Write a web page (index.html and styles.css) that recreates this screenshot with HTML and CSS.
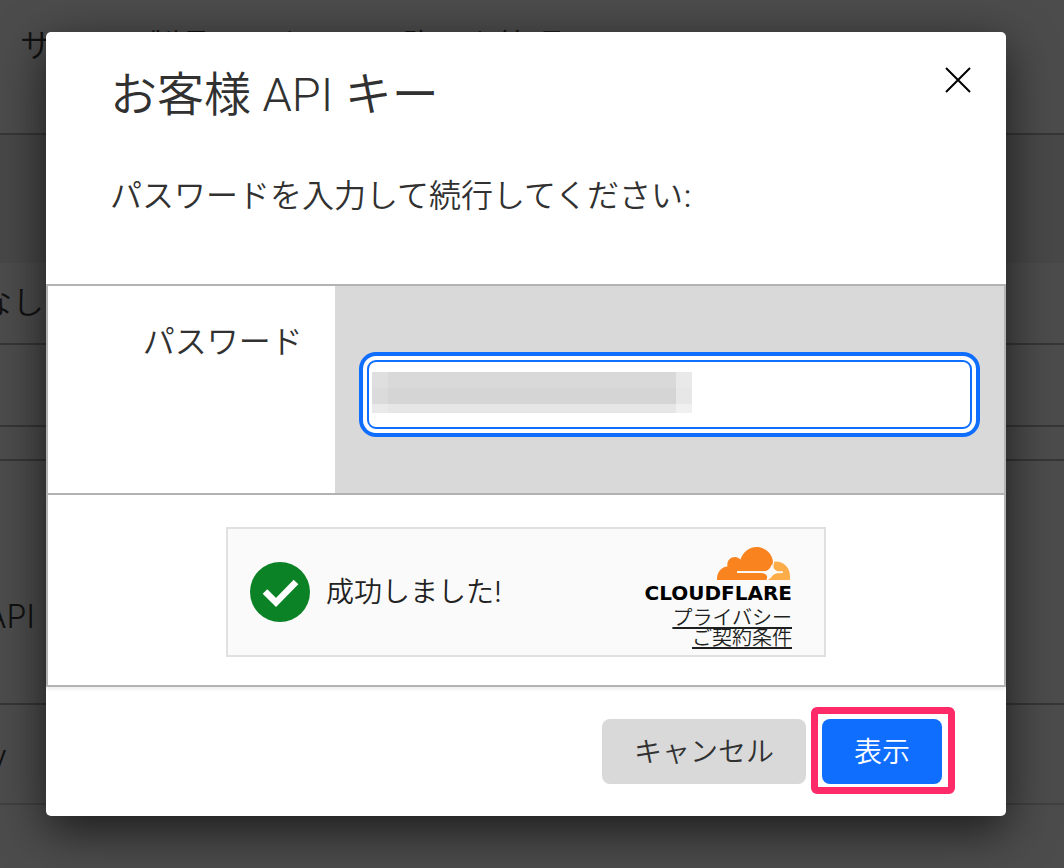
FILE: index.html
```html
<!DOCTYPE html>
<html lang="ja">
<head>
<meta charset="utf-8">
<meta name="viewport" content="width=device-width, initial-scale=1">
<title>お客様 API キー</title>
<link rel="stylesheet" href="styles.css">
</head>
<body>
<div class="page">
  <div class="page-row page-intro">サイトと製品のアクセスと許可を管理し</div>
  <div class="page-row page-head"></div>
  <div class="page-row page-item"><span>なし</span></div>
  <div class="page-row page-item"></div>
  <div class="page-row page-gap"></div>
  <div class="page-row page-key"><span>API</span></div>
  <div class="page-row page-last"><span>y</span></div>
</div>

<div class="overlay">
  <main class="dialog" role="dialog" aria-modal="true" aria-labelledby="dialog-title">
    <header class="dialog-header">
      <div class="title-bar">
        <h1 class="title" id="dialog-title">お客様 API キー</h1>
        <button class="close" type="button" aria-label="閉じる">
          <svg width="28" height="28" viewBox="0 0 28 28" fill="none" stroke="#000" stroke-width="2"><path d="M2 2 26 26M26 2 2 26"/></svg>
        </button>
      </div>
      <p class="lead">パスワードを入力して続行してください:</p>
    </header>

    <form class="form">
      <div class="field">
        <label class="field-label" for="password">パスワード</label>
        <div class="field-control">
          <div class="input-wrap">
            <input class="input" id="password" type="password">
            <span class="mask" aria-hidden="true"></span>
          </div>
        </div>
      </div>

      <div class="verify">
        <div class="widget">
          <svg class="check" width="60" height="60" viewBox="0 0 60 60"><circle cx="30" cy="30" r="30" fill="#0b8226"/><path d="M15 29.5 26 40.5 46 20" fill="none" stroke="#fff" stroke-width="6.5"/></svg>
          <span class="widget-text">成功しました!</span>
          <div class="brand">
            <svg class="cloud" width="73" height="33" viewBox="0 0 73 33">
              <path fill="#f9831f" d="M0 33C-.5 26 4 20 10.500 19.500 9.500 14 13 10 18 10 20 10 22 11 23.500 12.500 26 5 32 0 39.500 0 48 0 55 6 56 14.500L55 19.500C54 22.500 52 24 49.500 24.300H20V26H47.500C50 26.500 51 28.500 50 31L49.500 33Z"/>
              <path fill="#fcad48" d="M57.500 14.500C66 14 73 20 73 29V32.300L72.500 33H51.500C52 30.500 53.500 27.500 56 26H66V24.400H60.500C57.500 23.500 56 21.500 56.500 18.500Z"/>
              <path fill="#fafafa" d="M54.500 17.500 56 20C57 22.500 59 24 62 24.500L66 24.700V25.900L60 26.200C57 26.800 55 28.500 54 31L51.500 32 50 29C49 27 47 26.200 44.500 26H20V24.300H47C51 24 53.500 21.500 54.500 17.500Z"/>
            </svg>
            <span class="wordmark">CLOUDFLARE</span>
            <a class="link" href="#privacy">プライバシー</a>
            <a class="link" href="#terms">ご契約条件</a>
          </div>
        </div>
      </div>

      <footer class="actions">
        <button class="button" type="button">キャンセル</button>
        <div class="submit-wrap">
          <button class="button primary" type="submit">表示</button>
          <span class="highlight" aria-hidden="true"></span>
        </div>
      </footer>
    </form>
  </main>
</div>
</body>
</html>
```

FILE: styles.css
```css
* { box-sizing: border-box; }

body {
  margin: 0;
  min-height: 100vh;
  position: relative;
  overflow: hidden;
  background: #4c4c4c;
  color: #313131;
  font-family: Inter, "Noto Sans CJK JP", sans-serif;
  font-weight: 350;
  font-size: 32px;
}

.page { color: #111; line-height: 40px; }
.page-row { border-bottom: 2px solid #363636; white-space: nowrap; }
.page-row span { display: flex; justify-content: flex-end; width: 44px; }
.page-intro { height: 135px; padding: 26px 20px; }
.page-head { height: 128px; border-bottom: 0; background: #484848; }
.page-item { height: 82px; padding-top: 20px; }
.page-gap { height: 34px; }
.page-key { height: 244px; padding-top: 136px; }
.page-row.page-key span { width: 35px; }
.page-last { height: 100px; padding-top: 32px; border-color: #404040; }
.page-row.page-last span { width: 7px; }

.overlay {
  position: absolute;
  inset: 0;
  padding: 32px 58px 52px 46px;
}

.dialog {
  background: #fff;
  border-radius: 5px;
  box-shadow: 0 14px 48px rgba(0, 0, 0, .65);
}

.dialog-header { padding: 32px 32px 64px 64px; }
.title-bar { display: flex; justify-content: space-between; align-items: flex-start; }
.title { margin: 0; font-family: Roboto, "Noto Sans CJK JP", sans-serif; font-size: 47px; font-weight: 350; line-height: 62px; }
.close { padding: 0; border: 0; background: none; line-height: 0; margin: 2px; }
.lead { margin: 46px 0 0; line-height: 48px; }

.field {
  display: grid;
  grid-template-columns: 3fr 7fr;
  border: 2px solid #b3b3b3;
}
.field-label { padding: 32px 32px 0 0; text-align: right; line-height: 48px; }
.field-control { padding: 74px 32px 64px; background: #d9d9d9; }
.input-wrap { position: relative; }
.input {
  display: block;
  width: 100%;
  height: 69px;
  padding: 0 16px;
  border: 2px solid #106eff;
  border-radius: 9px;
  background: #fff;
  outline: 0;
  box-shadow: 0 0 0 4px #fff, 0 0 0 8px #106eff;
  font: inherit;
}
.mask {
  position: absolute;
  left: 5px;
  top: 12px;
  width: 320px;
  height: 41px;
  background:
    linear-gradient(90deg, rgba(255, 255, 255, .15) 16px, transparent 16px 304px, rgba(255, 255, 255, .42) 304px),
    linear-gradient(#d9d9d9 16px, #d5d5d5 16px 32px, #e6e6e6 32px);
}

.verify {
  display: flex;
  justify-content: center;
  padding: 32px 32px 28px;
  border: 2px solid #b3b3b3;
  border-top: 0;
  box-shadow: 0 2px 4px rgba(0, 0, 0, .08);
}
.widget {
  display: flex;
  align-items: center;
  gap: 16px;
  width: 600px;
  height: 130px;
  padding: 0 32px 0 22px;
  border: 2px solid #e0e0e0;
  background: #fafafa;
  color: #222;
}
.widget-text { font-size: 28px; line-height: 40px; }
.brand {
  display: flex;
  flex-direction: column;
  align-items: flex-end;
  margin-left: auto;
  padding-top: 10px;
}
.cloud { margin-right: 2px; }
.wordmark {
  color: #000;
  font-family: "DejaVu Sans", sans-serif;
  font-size: 20px;
  font-weight: 700;
  line-height: 26px;
  padding-bottom: 2px;
}
.link { color: #1d1f20; font-size: 20px; line-height: 20px; text-decoration-thickness: 2px; text-underline-offset: 2px; }

.actions { display: flex; justify-content: flex-end; gap: 16px; padding: 32px 64px 32px 32px; }
.button {
  height: 65px;
  padding: 0 32px 4px;
  border: 0;
  border-radius: 8px;
  background: #d9d9d9;
  color: #313131;
  font: inherit;
  font-size: 28px;
}
.primary { display: block; background: #106eff; color: #fff; }
.submit-wrap { position: relative; }
.highlight {
  position: absolute;
  inset: -12px -13px -10px -11px;
  border: 7px solid #ff2b68;
  border-radius: 6px;
  pointer-events: none;
}
```
